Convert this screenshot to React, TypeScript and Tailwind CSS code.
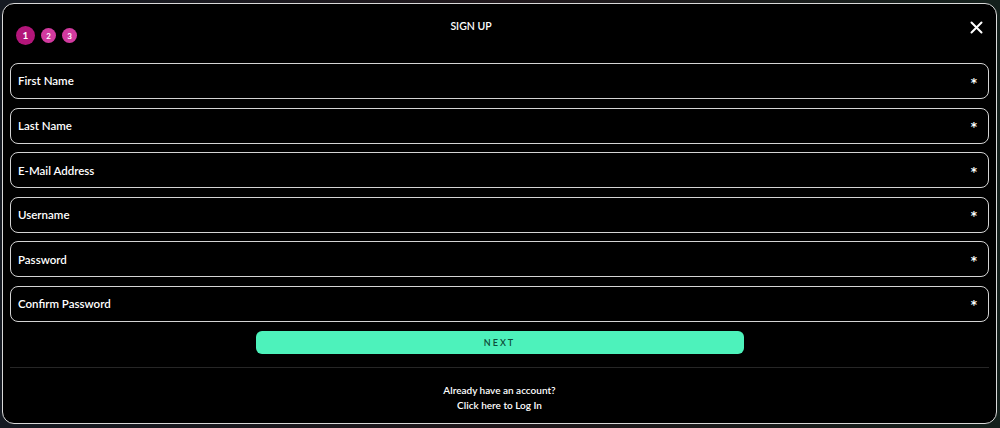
import React from 'react';

const fields = [
  'First Name',
  'Last Name',
  'E-Mail Address',
  'Username',
  'Password',
  'Confirm Password',
];

function StepDot({ n, active }: { n: number; active?: boolean }) {
  return (
    <div
      className={
        active
          ? 'flex h-[19px] w-[19px] items-center justify-center rounded-full bg-[#b3167a] text-[10px] font-bold text-white'
          : 'flex h-[15px] w-[15px] items-center justify-center rounded-full bg-[#d23a9f] text-[8px] font-bold text-white'
      }
    >
      {n}
    </div>
  );
}

function Field({ label }: { label: string }) {
  return (
    <div className="flex h-[36px] items-center justify-between rounded-lg border-[1.5px] border-[#d4d4d4] pl-[7px] pr-[11px]">
      <span className="text-[11.5px] font-semibold text-white">{label}</span>
      <span className="mt-[3px] font-['DejaVu_Sans',sans-serif] text-[12px] font-bold leading-none text-white">
        *
      </span>
    </div>
  );
}

export default function App() {
  return (
    <div
      className="h-[428px] w-full overflow-hidden bg-gradient-to-r from-[#151a22] via-[#1f171b] to-[#14201c] pt-[3px]"
      style={{ fontFamily: 'Lato, "Open Sans", sans-serif' }}
    >
      <div className="ml-[2px] flex h-[421px] w-[995px] flex-col rounded-xl border-[1.5px] border-[#d9d9d9] bg-black px-[7px]">
        {/* header */}
        <div className="flex h-[59px] items-start">
          <div className="mt-[22px] flex items-center gap-[6px] pl-[6px]">
            <StepDot n={1} active />
            <StepDot n={2} />
            <StepDot n={3} />
          </div>
          <div className="mr-[105px] mt-[15px] flex-1 text-center text-[10.5px] font-semibold text-white">
            SIGN UP
          </div>
          <button className="mr-[6px] mt-[17px] text-white">
            <svg width="13" height="13" viewBox="0 0 13 13">
              <path
                d="M1.5 1.5L11.5 11.5M11.5 1.5L1.5 11.5"
                stroke="currentColor"
                strokeWidth="2"
                strokeLinecap="round"
              />
            </svg>
          </button>
        </div>

        {/* fields */}
        <div className="flex flex-col gap-[8.6px]">
          {fields.map((f) => (
            <Field key={f} label={f} />
          ))}
        </div>

        <button className="mx-auto mt-[9px] h-[23px] w-[488px] rounded-md bg-[#4df2bb] text-[9px] font-semibold tracking-[0.22em] text-[#0d4d38]">
          NEXT
        </button>

        <div className="mt-[13px] h-px bg-[#262626]" />

        <div className="mt-[15px] text-center text-[10px] font-semibold leading-[15px] text-white">
          <div>Already have an account?</div>
          <div>Click here to Log In</div>
        </div>
      </div>
    </div>
  );
}
